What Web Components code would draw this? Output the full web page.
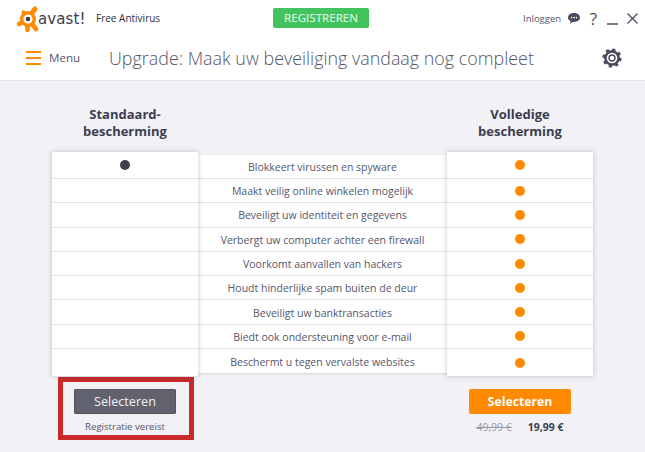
<!DOCTYPE html>
<html lang="nl">
<head>
<meta charset="utf-8">
<title>avast! Upgrade</title>
<style>
    html, body { margin: 0; padding: 0; }
    body { font-family: "Open Sans", "Liberation Sans", sans-serif; color: #3c3e50; }
</style>
</head>
<body>
<av-app>
    <av-titlebar slot="top"></av-titlebar>
    <av-subbar slot="top" heading="Upgrade: Maak uw beveiliging vandaag nog compleet"></av-subbar>
    <av-compare></av-compare>
</av-app>
<script>
const ORANGE = '#ff8a00';

window.customElements.define('av-app', class AvApp extends HTMLElement {
    constructor() {
        super();
        this.attachShadow({ mode: 'open' });
        this.shadowRoot.innerHTML = `
            <style>
                :host {
                    display: flex;
                    flex-direction: column;
                    width: 645px;
                    height: 452px;
                    overflow: hidden;
                    background: #f1f1f6;
                }
                ::slotted(av-compare) { flex: 1; }
            </style>
            <slot name="top"></slot>
            <slot></slot>
        `;
    }
});

window.customElements.define('av-titlebar', class AvTitlebar extends HTMLElement {
    constructor() {
        super();
        this.attachShadow({ mode: 'open' });
        this.shadowRoot.innerHTML = `
            <style>
                :host {
                    display: flex;
                    align-items: center;
                    height: 37px;
                    background: #fff;
                    font-size: 10px;
                }
                .brand {
                    display: flex;
                    align-items: center;
                    width: 273px;
                    padding-left: 15px;
                    box-sizing: border-box;
                }
                svg { display: block; flex: none; }
                .word {
                    font: 15px/16px "DejaVu Sans", sans-serif;
                    letter-spacing: .1px;
                    color: #3c3e50;
                    margin: 1px 0 0 -1px;
                    width: 58px;
                }
                .product { font-size: 10px; font-weight: 400; color: #2c2e3c; margin-top: -1px; }
                .register {
                    width: 96px;
                    height: 20px;
                    margin-top: -1px;
                    box-sizing: border-box;
                    background: #43c35e;
                    border-radius: 2px;
                    color: #eafbee;
                    font-size: 11.6px;
                    font-weight: 400;
                    line-height: 20px;
                    text-align: center;
                }
                .login { margin-left: 154px; color: #55566a; width: 45px; font-size: 9.5px; }
                .icons { display: flex; align-items: center; gap: 9px; }
                .help { font-size: 17px; line-height: 20px; color: #4a4b5c; width: 9px; text-align: center; }
            </style>
            <div class="brand">
                <svg width="24" height="28" viewBox="0 0 24 28">
                    <g stroke="${ORANGE}" stroke-linecap="round" fill="none">
                        <path d="M13 13 L20 4" stroke-width="5"/>
                        <path d="M13 14 L4 19" stroke-width="4.5"/>
                        <path d="M13 14 L21 24" stroke-width="4.5"/>
                        <path d="M12 13 L8.5 7" stroke-width="3.5"/>
                        <path d="M13 16 L12.5 25" stroke-width="4.5"/>
                    </g>
                    <circle cx="13" cy="14" r="8" fill="${ORANGE}"/>
                    <circle cx="13" cy="14" r="4.6" fill="#fff"/>
                    <circle cx="13" cy="14" r="2.3" fill="#3c3e50"/>
                </svg>
                <span class="word">avast!</span>
                <span class="product">Free Antivirus</span>
            </div>
            <div class="register">REGISTREREN</div>
            <div class="login">Inloggen</div>
            <div class="icons">
                <svg width="12" height="11" viewBox="0 0 12 11">
                    <path d="M6 0 C9.5 0 12 2 12 4.6 C12 7.2 9.5 9 6 9 L4.6 9 L2 11 L2.6 8.3 C1 7.5 0 6.2 0 4.6 C0 2 2.5 0 6 0 Z" fill="#4a4b5c"/>
                    <circle cx="3.6" cy="4.6" r=".8" fill="#fff"/><circle cx="6" cy="4.6" r=".8" fill="#fff"/><circle cx="8.4" cy="4.6" r=".8" fill="#fff"/>
                </svg>
                <span class="help">?</span>
                <svg width="11" height="12" viewBox="0 0 11 12"><path d="M0 11 H11" stroke="#4a4b5c" stroke-width="1.5"/></svg>
                <svg width="11" height="11" viewBox="0 0 11 11"><path d="M.5 .5 L10.5 10.5 M10.5 .5 L.5 10.5" stroke="#4a4b5c" stroke-width="1.3"/></svg>
            </div>
        `;
    }
});

window.customElements.define('av-subbar', class AvSubbar extends HTMLElement {
    constructor() {
        super();
        this.attachShadow({ mode: 'open' });
        this.shadowRoot.innerHTML = `
            <style>
                :host {
                    display: flex;
                    align-items: center;
                    height: 44px;
                    padding: 0 23px 2px 26px;
                    box-sizing: border-box;
                    background: #fff;
                    border-bottom: 1px solid #e6e6ea;
                }
                .burger { display: flex; flex-direction: column; gap: 4px; width: 15px; }
                .burger i { display: block; height: 2px; background: ${ORANGE}; }
                .menu { margin-left: 8px; width: 60px; font-size: 11.6px; color: #55566a; }
                h1 {
                    flex: 1;
                    margin: 0;
                    font-size: 17.9px;
                    font-weight: 300;
                    color: #55566a;
                }
                svg { display: block; }
            </style>
            <div class="burger"><i></i><i></i><i></i></div>
            <div class="menu">Menu</div>
            <h1>${this.getAttribute('heading')}</h1>
            <svg width="20" height="20" viewBox="0 0 20 20">
                <circle cx="10" cy="10" r="6.6" fill="none" stroke="#4a4b5c" stroke-width="2.6"/>
                <circle cx="10" cy="10" r="8" fill="none" stroke="#4a4b5c" stroke-width="3.2" stroke-dasharray="3 3.28"/>
                <circle cx="10" cy="10" r="3" fill="none" stroke="#4a4b5c" stroke-width="1.4"/>
            </svg>
        `;
    }
});

window.customElements.define('av-cell', class AvCell extends HTMLElement {
    constructor() {
        super();
        this.attachShadow({ mode: 'open' });
        this.shadowRoot.innerHTML = `
            <style>
                :host {
                    display: flex;
                    align-items: center;
                    justify-content: center;
                    box-sizing: border-box;
                    height: 24.3px;
                    border-bottom: 1px solid #e2e2e8;
                    font-size: 10.5px;
                    color: #55566a;
                }
                :host(:last-child) { border-bottom: 0; }
                i { width: 10px; height: 10px; border-radius: 50%; background: var(--dot); }
                span { padding-top: 1px; }
            </style>
            ${this.dataset.dot ? '<i></i>' : '<span><slot></slot></span>'}
        `;
        if (this.dataset.dot) {
            this.style.setProperty('--dot', this.dataset.dot);
        }
    }
});

window.customElements.define('av-column', class AvColumn extends HTMLElement {
    constructor() {
        super();
        this.attachShadow({ mode: 'open' });
        this.shadowRoot.innerHTML = `
            <style>
                :host {
                    display: block;
                    position: relative;
                    background: #fff;
                    z-index: 1;
                    box-shadow: 0 0 5px rgba(50, 50, 70, .28);
                }
                :host([mid]) {
                    margin: 3px 0;
                    z-index: 0;
                    box-shadow: 0 1px 2px rgba(50, 50, 70, .15);
                }
                ::slotted(av-cell:first-child) { height: 27px; }
                ::slotted(av-cell:last-child) { height: 27px; }
                :host([mid]) ::slotted(av-cell:first-child) { height: 24px; }
                :host([mid]) ::slotted(av-cell:last-child) { height: 24px; }
            </style>
            <slot></slot>
        `;
    }
});

window.customElements.define('av-button', class AvButton extends HTMLElement {
    constructor() {
        super();
        this.attachShadow({ mode: 'open' });
        this.shadowRoot.innerHTML = `
            <style>
                :host {
                    display: block;
                    width: 102px;
                    height: 25px;
                    margin: 0 auto;
                    border-radius: 2px;
                    background: #62626f;
                    box-shadow: inset 0 0 0 1px #55555f;
                    color: #f1f1f4;
                    font-size: 12.6px;
                    font-weight: 400;
                    line-height: 25px;
                    text-align: center;
                }
                :host([primary]) {
                    background: ${ORANGE};
                    box-shadow: none;
                    color: #fff;
                    font-size: 12.2px;
                    font-weight: 700;
                }
            </style>
            <slot></slot>
        `;
    }
});

window.customElements.define('av-compare', class AvCompare extends HTMLElement {
    constructor() {
        super();
        const features = [
            'Blokkeert virussen en spyware',
            'Maakt veilig online winkelen mogelijk',
            'Beveiligt uw identiteit en gegevens',
            'Verbergt uw computer achter een firewall',
            'Voorkomt aanvallen van hackers',
            'Houdt hinderlijke spam buiten de deur',
            'Beveiligt uw banktransacties',
            'Biedt ook ondersteuning voor e-mail',
            'Beschermt u tegen vervalste websites',
        ];
        const cells = (fn) => features.map(fn).join('');
        this.attachShadow({ mode: 'open' });
        this.shadowRoot.innerHTML = `
            <style>
                :host {
                    display: grid;
                    grid-template-columns: 146px 249px 146px;
                    grid-template-rows: 71px 224.1px auto;
                    padding-left: 52px;
                    position: relative;
                }
                h2 {
                    margin: 0;
                    padding-top: 25px;
                    font-size: 13px;
                    line-height: 17px;
                    font-weight: 700;
                    text-align: center;
                    color: #3c3e50;
                }
                .foot { padding-top: 13px; text-align: center; position: relative; }
                .note { margin-top: 6px; font-size: 9.6px; line-height: 14px; color: #55566a; }
                .prices { display: flex; justify-content: center; gap: 16px; margin-top: 6px; font-size: 10.5px; line-height: 14px; }
                .old { color: #9a9aa6; text-decoration: line-through; }
                .new { font-weight: 700; color: #3c3e50; }
                .frame {
                    position: absolute;
                    left: 6px;
                    top: 1px;
                    width: 136px;
                    height: 63px;
                    box-sizing: border-box;
                    border: 5px solid #c92a2a;
                }
            </style>
            <h2>Standaard-<br>bescherming</h2>
            <div></div>
            <h2>Volledige<br>bescherming</h2>
            <av-column>
                ${cells((f, i) => i === 0 ? '<av-cell data-dot="#3e3f50"></av-cell>' : '<av-cell></av-cell>')}
            </av-column>
            <av-column mid>
                ${cells((f) => `<av-cell>${f}</av-cell>`)}
            </av-column>
            <av-column>
                ${cells(() => `<av-cell data-dot="${ORANGE}"></av-cell>`)}
            </av-column>
            <div class="foot">
                <div class="frame"></div>
                <av-button>Selecteren</av-button>
                <div class="note">Registratie vereist</div>
            </div>
            <div></div>
            <div class="foot">
                <av-button primary>Selecteren</av-button>
                <div class="prices"><span class="old">49,99 €</span><span class="new">19,99 €</span></div>
            </div>
        `;
    }
});
</script>
</body>
</html>
